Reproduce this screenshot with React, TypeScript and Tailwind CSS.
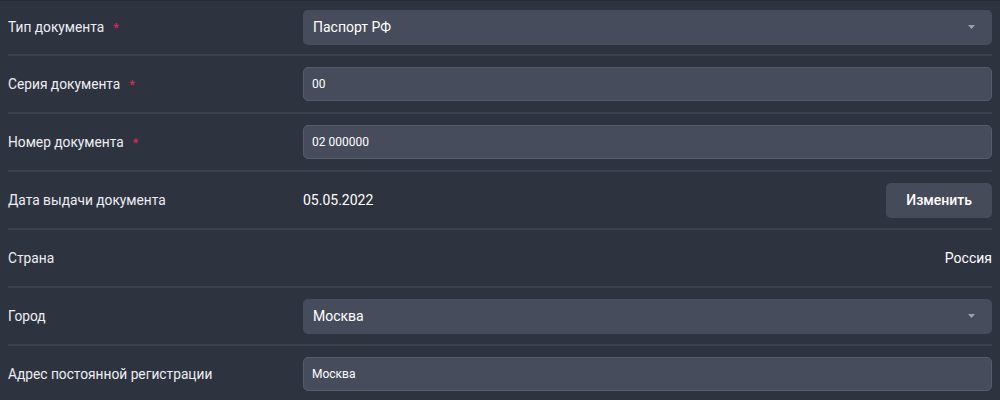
const font = { fontFamily: "Roboto, 'Noto Sans', sans-serif" };

function Req() {
  return <span className="ml-[9px] text-[#e0285d] text-[13px]">*</span>;
}

function Chevron() {
  return (
    <svg width="7" height="4" viewBox="0 0 7 4" className="text-[#9aa0ad]">
      <path d="M0 0h7L3.5 4z" fill="currentColor" />
    </svg>
  );
}

function Row({ label, required, children, first }: { label: string; required?: boolean; children?: React.ReactNode; first?: boolean }) {
  return (
    <div className={`grid grid-cols-[295px_1fr] items-center border-b-2 border-[#3b404d] ${first ? "h-[56px]" : "h-[58px]"}`}>
      <div className="text-[13.75px] text-[#eceef2]">
        {label}
        {required && <Req />}
      </div>
      <div className="flex items-center">{children}</div>
    </div>
  );
}

function Select({ value }: { value: string }) {
  return (
    <div className="flex-1 h-[35px] rounded-[5px] bg-[#474c5c] flex items-center justify-between pl-[10px] pr-[17px]">
      <span className="text-[14px] text-white">{value}</span>
      <Chevron />
    </div>
  );
}

function Input({ value }: { value: string }) {
  return (
    <div className="flex-1 h-[34px] rounded-[5px] bg-[#474c5c] border border-[#565b6a] flex items-center pl-2">
      <span className="text-[12px] text-white">{value}</span>
    </div>
  );
}

export default function App() {
  return (
    <div style={font} className="w-[1000px] h-[400px] bg-[#2e3340] overflow-hidden border-t border-[#282c37]">
      <div className="pl-2 pr-2 -mt-px">
        <Row label="Тип документа" required first>
          <Select value="Паспорт РФ" />
        </Row>
        <Row label="Серия документа" required>
          <Input value="00" />
        </Row>
        <Row label="Номер документа" required>
          <Input value="02 000000" />
        </Row>
        <Row label="Дата выдачи документа">
          <div className="flex-1 flex items-center justify-between">
            <span className="text-[14px] text-white">05.05.2022</span>
            <button className="h-[35px] px-5 rounded-[5px] bg-[#464b5a] text-[14px] font-medium text-white">Изменить</button>
          </div>
        </Row>
        <Row label="Страна">
          <div className="flex-1 text-right text-[14px] text-white">Россия</div>
        </Row>
        <Row label="Город">
          <Select value="Москва" />
        </Row>
        <Row label="Адрес постоянной регистрации">
          <Input value="Москва" />
        </Row>
      </div>
    </div>
  );
}
